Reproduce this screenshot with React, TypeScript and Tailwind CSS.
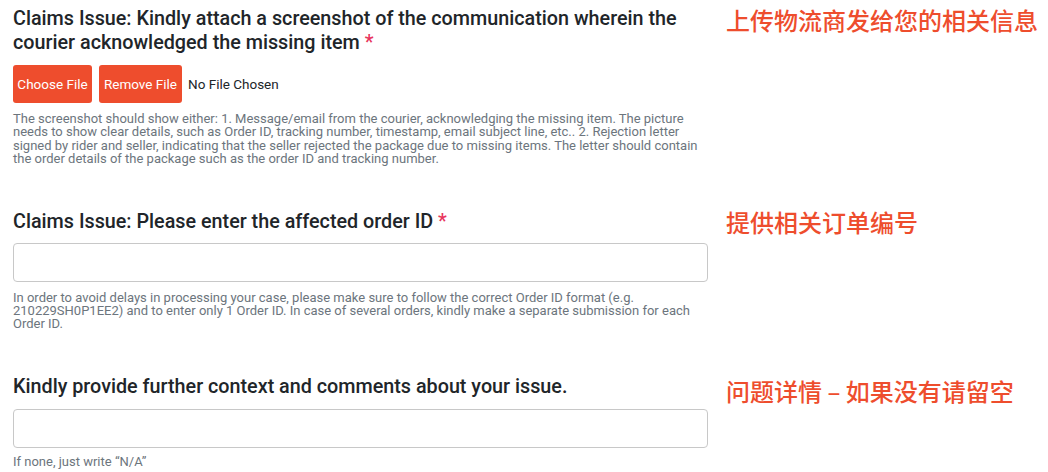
import React from "react";

function Note({ children }: { children: React.ReactNode }) {
  return (
    <div
      className="text-[#ee4d2d] text-[24px] leading-[30px] font-medium whitespace-nowrap"
      style={{ fontFamily: '"Noto Sans CJK SC", "Noto Sans", sans-serif' }}
    >
      {children}
    </div>
  );
}

function Label({ children, required }: { children: React.ReactNode; required?: boolean }) {
  return (
    <div className="text-[19.75px] leading-[24px] font-medium text-[#212529]">
      {children}
      {required && <span className="text-[#e8365d]"> *</span>}
    </div>
  );
}

function Help({ children }: { children: React.ReactNode }) {
  return <div className="text-[13px] leading-[13.4px] text-[#6c757d]">{children}</div>;
}

function TextBox() {
  return (
    <input
      type="text"
      className="block w-full h-[39px] border border-[#c8c8c8] rounded-[4px] px-3 text-[14px] outline-none"
    />
  );
}

export default function App() {
  return (
    <div
      className="w-[1048px] h-[472px] overflow-hidden bg-white pl-[13px] pt-[7px]"
      style={{ fontFamily: "Roboto, 'Liberation Sans', sans-serif" }}
    >
      <div className="flex gap-[18px]">
        <div className="w-[695px] shrink-0">
          <Label required>
            Claims Issue: Kindly attach a screenshot of the communication wherein the courier
            acknowledged the missing item
          </Label>
          <div className="flex items-center gap-[7px] mt-[10px]">
            <button className="h-[38px] w-[79px] bg-[#ee4d2d] text-white text-[13.5px] rounded-[3px]">
              Choose File
            </button>
            <button className="h-[38px] w-[83px] bg-[#ee4d2d] text-white text-[13.5px] rounded-[3px]">
              Remove File
            </button>
            <span className="text-[13.5px] text-[#212529] -ml-[1px]">No File Chosen</span>
          </div>
          <div className="mt-[9px]">
            <Help>
              The screenshot should show either: 1. Message/email from the courier, acknowledging
              the missing item. The picture needs to show clear details, such as Order ID, tracking
              number, timestamp, email subject line, etc.. 2. Rejection letter signed by rider and
              seller, indicating that the seller rejected the package due to missing items. The
              letter should contain the order details of the package such as the order ID and
              tracking number.
            </Help>
          </div>
        </div>
        <div className="-mt-[2px]">
          <Note>上传物流商发给您的相关信息</Note>
        </div>
      </div>

      <div className="flex gap-[18px] mt-[44px]">
        <div className="w-[695px] shrink-0">
          <Label required>Claims Issue: Please enter the affected order ID</Label>
          <div className="mt-[9px]">
            <TextBox />
          </div>
          <div className="mt-[9px]">
            <Help>
              In order to avoid delays in processing your case, please make sure to follow the
              correct Order ID format (e.g. 210229SH0P1EE2) and to enter only 1 Order ID. In case of
              several orders, kindly make a separate submission for each Order ID.
            </Help>
          </div>
        </div>
        <div className="-mt-[3px]">
          <Note>提供相关订单编号</Note>
        </div>
      </div>

      <div className="flex gap-[18px] mt-[44px]">
        <div className="w-[695px] shrink-0">
          <Label>Kindly provide further context and comments about your issue.</Label>
          <div className="mt-[10px]">
            <TextBox />
          </div>
          <div className="mt-[7px]">
            <Help>If none, just write “N/A”</Help>
          </div>
        </div>
        <div className="mt-[1px]">
          <Note>问题详情 – 如果没有请留空</Note>
        </div>
      </div>
    </div>
  );
}
